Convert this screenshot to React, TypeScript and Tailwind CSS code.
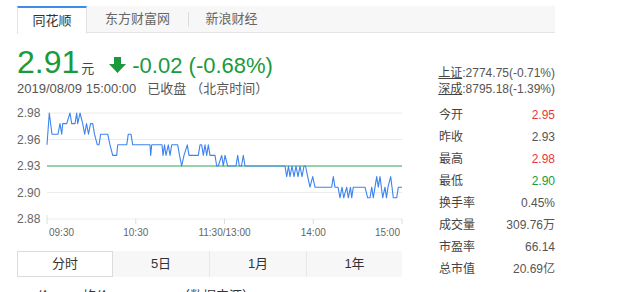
import React from "react";

const GREEN = "#1a9a3c";

const tabs = ["同花顺", "东方财富网", "新浪财经"];

const stats: { label: string; value: string; color: string }[] = [
    { label: "今开", value: "2.95", color: "text-[#e8383d]" },
    { label: "昨收", value: "2.93", color: "text-[#555]" },
    { label: "最高", value: "2.98", color: "text-[#e8383d]" },
    { label: "最低", value: "2.90", color: "text-[#1a9a3c]" },
    { label: "换手率", value: "0.45%", color: "text-[#555]" },
    { label: "成交量", value: "309.76万", color: "text-[#555]" },
    { label: "市盈率", value: "66.14", color: "text-[#555]" },
    { label: "总市值", value: "20.69亿", color: "text-[#555]" },
];

// [x on page, price]
const pts: [number, number][] = [
    [47, 2.95], [49.3, 2.98], [52, 2.96], [58, 2.96], [60, 2.97], [61.7, 2.96], [62.7, 2.97],
    [66.7, 2.97], [70, 2.98], [71.7, 2.97], [75, 2.97], [76.7, 2.98], [77.7, 2.97], [80, 2.98],
    [82.7, 2.97], [84.7, 2.96], [86.5, 2.97], [88.5, 2.96], [90.5, 2.97], [92.7, 2.97],
    [94.5, 2.96], [97.3, 2.95], [99, 2.95], [100.7, 2.96], [107.7, 2.96], [110, 2.95],
    [112.7, 2.94], [116.7, 2.94], [117.7, 2.95], [126.7, 2.95], [128.3, 2.96], [131, 2.96],
    [132.7, 2.95], [150, 2.95], [150.7, 2.94], [151.7, 2.95], [162, 2.95], [163, 2.94],
    [164.5, 2.95], [166, 2.94], [168.3, 2.95], [170, 2.94], [171.7, 2.95], [177.7, 2.95],
    [179.5, 2.94], [181.7, 2.93], [184, 2.94], [187.3, 2.95], [189, 2.94], [198.3, 2.94],
    [200, 2.95], [201.7, 2.95], [203.3, 2.94], [205, 2.95], [206.7, 2.94], [208.3, 2.95],
    [210, 2.94], [215, 2.94], [216.7, 2.93], [218.3, 2.93], [221.7, 2.94], [223.3, 2.93],
    [225, 2.94], [227.7, 2.93], [236, 2.93], [237.7, 2.94], [239.3, 2.93], [241.5, 2.93],
    [243.3, 2.94], [245, 2.93], [285, 2.93], [286.7, 2.92], [288.5, 2.93], [290, 2.92],
    [292, 2.93], [294, 2.92], [296, 2.93], [298, 2.92], [300, 2.93], [302, 2.92], [304, 2.93],
    [305.5, 2.93], [307.7, 2.92], [310, 2.91], [312.7, 2.92], [315, 2.91], [331.7, 2.91],
    [333.3, 2.92], [335, 2.91], [338, 2.91], [340, 2.9], [342, 2.91], [343.7, 2.9],
    [346.7, 2.91], [348.3, 2.9], [350.5, 2.91], [351.7, 2.9], [353.3, 2.91], [365, 2.91],
    [367.7, 2.9], [370, 2.9], [371.7, 2.91], [373.3, 2.9], [376.7, 2.92], [378.3, 2.91],
    [380, 2.92], [382.7, 2.9], [385, 2.91], [386.5, 2.9], [388, 2.91], [390.7, 2.92],
    [393.3, 2.9], [396.7, 2.9], [398.3, 2.91], [402, 2.91],
];

const py = (p: number) => 113 + (2.98 - p) * 1060;

function Chart() {
    const grid = [
        { y: 113, label: "2.98" },
        { y: 139.5, label: "2.96" },
        { y: 166, label: "2.93" },
        { y: 192.5, label: "2.90" },
        { y: 219, label: "2.88" },
    ];
    const ticks = [135.75, 224.5, 313.25, 402];
    const line = pts.map(([x, p]) => `${x},${py(p).toFixed(1)}`).join(" ");

    return (
        <svg width="390" height="142" viewBox="17 100 390 142" className="block">
            {grid.map((g) => (
                <g key={g.label}>
                    <line x1="47" x2="402" y1={g.y} y2={g.y} stroke="#ececec" strokeWidth="1" />
                    <text x="17" y={g.y + 4} fontSize="12" fill="#666">
                        {g.label}
                    </text>
                </g>
            ))}
            <line x1="47" x2="47" y1="215" y2="224" stroke="#ddd" />
            {ticks.map((t) => (
                <line key={t} x1={t} x2={t} y1="219" y2="224" stroke="#ddd" />
            ))}
            <line x1="47" x2="402" y1="166" y2="166" stroke="#3aae5c" strokeWidth="1.2" />
            <polyline points={line} fill="none" stroke="#3d84f3" strokeWidth="1.1" strokeLinejoin="round" />
            <g fontSize="10" fill="#666">
                <text x="49" y="236">09:30</text>
                <text x="135.75" y="236" textAnchor="middle">10:30</text>
                <text x="224.5" y="236" textAnchor="middle">11:30/13:00</text>
                <text x="313.25" y="236" textAnchor="middle">14:00</text>
                <text x="400" y="236" textAnchor="end">15:00</text>
            </g>
        </svg>
    );
}

export default function App() {
    return (
        <div className="w-[617px] h-[292px] overflow-hidden bg-white pl-[17px] pt-[6px] font-['Liberation_Sans','Noto_Sans_CJK_SC',sans-serif]">
            {/* source tabs */}
            <div className="flex h-[27px] w-[538px] bg-[#f7f7f7] border-b border-[#e3e3e3]">
                <div className="w-[70px] h-[28px] bg-white border-t-2 border-t-[#3b8de8] border-l border-r border-[#e3e3e3] flex items-center justify-center text-[13px] text-[#333] pb-[1px]">
                    {tabs[0]}
                </div>
                <div className="w-[101px] flex items-center justify-center text-[13px] text-[#666]">{tabs[1]}</div>
                <div className="w-px h-[15px] bg-[#dcdcdc] self-center" />
                <div className="w-[85px] flex items-center justify-center text-[13px] text-[#666]">{tabs[2]}</div>
            </div>

            {/* price header */}
            <div className="flex w-[538px] justify-between items-end mt-[13px]">
                <div>
                    <div className="flex items-baseline h-[32px]">
                        <span className="text-[32px] leading-none" style={{ color: GREEN }}>2.91</span>
                        <span className="ml-[2px] text-[13px] text-[#444]">元</span>
                        <svg className="ml-[15px] self-center mt-[6px]" width="17" height="16" viewBox="0 0 17 16">
                            <path d="M5 0h7v7h5l-8.5 9L0 7h5z" fill={GREEN} />
                        </svg>
                        <span className="ml-[6px] text-[22px] leading-none" style={{ color: GREEN }}>-0.02 (-0.68%)</span>
                    </div>
                    <div className="mt-[3px] text-[13px] leading-[16px] text-[#555]">
                        2019/08/09 15:00:00<span className="ml-[11px]">已收盘</span>
                        <span className="ml-[4px]">（北京时间）</span>
                    </div>
                </div>
                <div className="text-[12px] leading-[16px] text-[#555] text-right">
                    <div>
                        <span className="underline text-[#444]">上证</span>:2774.75(-0.71%)
                    </div>
                    <div>
                        <span className="underline text-[#444]">深成</span>:8795.18(-1.39%)
                    </div>
                </div>
            </div>

            {/* chart + stats */}
            <div className="flex mt-[3px]">
                <div className="w-[390px]">
                    <Chart />
                    <div className="flex w-[385px] h-[26px] mt-[9px] bg-[#f7f7f7] text-[13px] text-[#333]">
                        <div className="w-[96px] bg-white border border-[#dcdcdc] flex items-center justify-center">分时</div>
                        <div className="w-[96px] flex items-center justify-center">5日</div>
                        <div className="w-px h-full bg-[#e8e8e8]" />
                        <div className="w-[96px] flex items-center justify-center">1月</div>
                        <div className="w-px h-full bg-[#e8e8e8]" />
                        <div className="flex-1 flex items-center justify-center">1年</div>
                    </div>
                    <div className="flex mt-[11px] text-[13px] leading-[16px] text-[#333]">
                        <span className="ml-[20px]">价</span>
                        <span className="ml-[33px]">均价</span>
                        <span className="ml-[68px]">（数据来源）</span>
                    </div>
                </div>
                <div className="ml-[32px] w-[116px] pt-[4px] text-[12px] leading-[22px]">
                    {stats.map((s) => (
                        <div key={s.label} className="flex justify-between">
                            <span className="text-[#444]">{s.label}</span>
                            <span className={s.color}>{s.value}</span>
                        </div>
                    ))}
                </div>
            </div>
        </div>
    );
}
